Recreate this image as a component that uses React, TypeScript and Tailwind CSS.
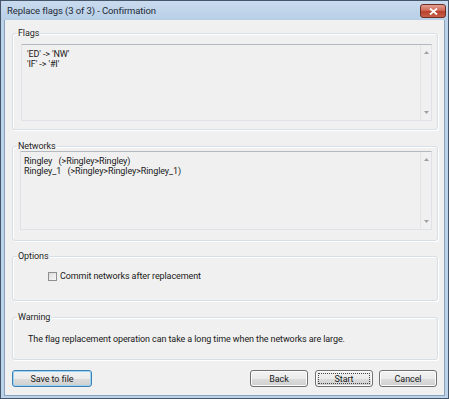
import React, { useState } from 'react'

const font = { fontFamily: '"Roboto", "Liberation Sans", sans-serif' }
const txt = 'text-[9px] leading-[10px] tracking-[-0.1px] text-[#1a1a1a]'

function ListBox({ lines, h, textLeft }: { lines: string[]; h: string; textLeft: string }) {
  return (
    <div className={`flex ${h} border border-[#dfe3e8] border-t-[#b4b8bf] bg-[#f0f0f0]`}>
      <div className={`flex-1 pt-[4px] ${textLeft} ${txt} whitespace-pre`}>
        {lines.map((l, i) => (
          <div key={i}>{l}</div>
        ))}
      </div>
      {/* scrollbar */}
      <div className="w-[11px] border-l border-[#e4e4e4] flex flex-col justify-between items-center py-[6px]">
        <svg width="5" height="3" viewBox="0 0 5 3"><path d="M0 3 L2.5 0 L5 3Z" fill="#a0a0a0" /></svg>
        <svg width="5" height="3" viewBox="0 0 5 3"><path d="M0 0 L2.5 3 L5 0Z" fill="#a0a0a0" /></svg>
      </div>
    </div>
  )
}

function Group({ title, className, children }: { title: string; className: string; children: React.ReactNode }) {
  return (
    <fieldset className={`p-0 border border-[#d5dfe5] rounded-[3px] shadow-[inset_1px_1px_0_#fff,1px_1px_0_#fff] ${className}`}>
      <legend className={`ml-[4px] px-[1px] ${txt} text-[#1e1e1e]`}>{title}</legend>
      {children}
    </fieldset>
  )
}

function Btn({ label, w, kind }: { label: string; w: string; kind?: 'default' | 'focus' }) {
  const border = kind === 'default' ? 'border-[#3c7fb1] shadow-[inset_0_0_0_1px_#9cd4f4]' : 'border-[#707070] shadow-[inset_0_0_0_1px_#fcfcfc]'
  return (
    <button className={`${w} h-[17px] rounded-[3px] border ${border} bg-[linear-gradient(#f2f2f2_0%,#ebebeb_50%,#dddddd_50%,#cfcfcf_100%)] p-[2px] ${txt}`}>
      <div className={`h-full flex items-center justify-center ${kind === 'focus' ? 'border border-dotted border-[#444]' : ''}`}>{label}</div>
    </button>
  )
}

export default function App() {
  const [commit, setCommit] = useState(false)

  return (
    <div className="w-[449px] h-[399px] flex flex-col bg-[#bcd2e9] border border-[#45566a]" style={font}>
      {/* Title bar */}
      <div className="h-[19px] flex items-start justify-between pl-[6px] pr-[2px] bg-[linear-gradient(#c9dbee,#b8cfe7)]">
        <span className="mt-[4px] text-[9.5px] leading-[12px] tracking-[-0.1px] text-[#1e2a36]">Replace flags (3 of 3) - Confirmation</span>
        <div className="w-[26px] h-[14px] mt-[3px] rounded-[3px] border border-[#6d2f28] bg-[linear-gradient(#e3a093,#cf6a57_45%,#b8412c_55%,#c8604a)] flex items-center justify-center">
          <svg width="9" height="7" viewBox="0 0 9 7">
            <path d="M1 0.5 L8 6.5 M8 0.5 L1 6.5" stroke="#fff" strokeWidth="1.8" />
          </svg>
        </div>
      </div>

      {/* Client area */}
      <div className="flex-1 mx-[3px] mb-[2px] bg-[#f0f0f0] border border-[#8aa2bb] border-t-0 flex flex-col pt-[8px] pl-[7px] pr-[6px]">
        <Group title="Flags" className="h-[102px]">
          <div className="mt-[6px] ml-[8px] mr-[5px]">
            <ListBox h="h-[77px]" lines={["'ED' -> 'NW'", "'IF' -> '#I'"]} textLeft="pl-[5px]" />
          </div>
        </Group>

        <Group title="Networks" className="mt-[11px] h-[100px]">
          <div className="ml-[7px] mr-[5px]">
            <ListBox
              h="h-[79px]"
              lines={['Ringley   (>Ringley>Ringley)', 'Ringley_1   (>Ringley>Ringley>Ringley_1)']}
              textLeft="pl-[3px]"
            />
          </div>
        </Group>

        <Group title="Options" className="mt-[10px] h-[50px]">
          <label className={`mt-[10px] ml-[35px] flex items-center gap-[3px] ${txt}`}>
            <input
              type="checkbox"
              checked={commit}
              onChange={e => setCommit(e.target.checked)}
              className="appearance-none w-[9px] h-[9px] border border-[#8f8f8f] bg-[linear-gradient(135deg,#dcdcdc,#f8f8f8)] m-0"
            />
            Commit networks after replacement
          </label>
        </Group>

        <Group title="Warning" className="mt-[11px] h-[48px]">
          <p className={`mt-[12px] ml-[15px] ${txt}`}>
            The flag replacement operation can take a long time when the networks are large.
          </p>
        </Group>

        <div className="mt-[10px] flex items-center">
          <Btn label="Save to file" w="w-[80px]" kind="default" />
          <div className="flex-1" />
          <div className="flex mr-[1px]">
            <Btn label="Back" w="w-[58px]" />
            <div className="w-[7px]" />
            <Btn label="Start" w="w-[58px]" kind="focus" />
            <div className="w-[6px]" />
            <Btn label="Cancel" w="w-[58px]" />
          </div>
        </div>
      </div>
    </div>
  )
}
